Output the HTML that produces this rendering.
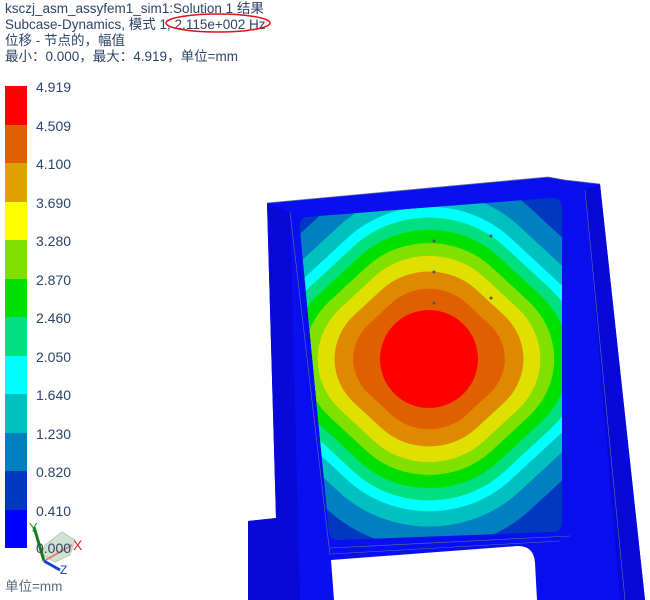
<!DOCTYPE html>
<html><head><meta charset="utf-8"><style>
html,body{margin:0;padding:0;background:#fff;width:650px;height:600px;overflow:hidden;}
body{position:relative;font-family:"Liberation Sans","Noto Sans CJK SC",sans-serif;color:#2c4466;}
.t{position:absolute;left:5px;font-size:13.5px;line-height:16px;white-space:nowrap;}
.lab{position:absolute;left:36px;font-size:14px;line-height:16px;}
.band{position:absolute;left:5px;width:22px;height:38.6px;}
</style></head><body>
<div class="t" style="top:1px">ksczj_asm_assyfem1_sim1:Solution 1 结果</div>
<div class="t" style="top:17px">Subcase-Dynamics, 模式 1, 2.115e+002 Hz</div>
<div class="t" style="top:33px">位移 - 节点的，幅值</div>
<div class="t" style="top:49px">最小：0.000，最大：4.919，单位=mm</div>
<svg style="position:absolute;left:0;top:0" width="650" height="600">
<ellipse cx="218" cy="23" rx="52" ry="9" fill="none" stroke="#e0101a" stroke-width="1.5"/>
</svg>
<div class="band" style="top:86px;background:#ff0000"></div>
<div class="band" style="top:124.5px;background:#e06000"></div>
<div class="band" style="top:163px;background:#e0a000"></div>
<div class="band" style="top:201.5px;background:#ffff00"></div>
<div class="band" style="top:240px;background:#80e000"></div>
<div class="band" style="top:278.5px;background:#00e000"></div>
<div class="band" style="top:317px;background:#00e080"></div>
<div class="band" style="top:355.5px;background:#00ffff"></div>
<div class="band" style="top:394px;background:#00c0c0"></div>
<div class="band" style="top:432.5px;background:#0080c0"></div>
<div class="band" style="top:471px;background:#0038c0"></div>
<div class="band" style="top:509.5px;height:38px;background:#0000ff"></div>
<div class="lab" style="top:79px">4.919</div>
<div class="lab" style="top:118px">4.509</div>
<div class="lab" style="top:156px">4.100</div>
<div class="lab" style="top:195px">3.690</div>
<div class="lab" style="top:233px">3.280</div>
<div class="lab" style="top:272px">2.870</div>
<div class="lab" style="top:310px">2.460</div>
<div class="lab" style="top:349px">2.050</div>
<div class="lab" style="top:387px">1.640</div>
<div class="lab" style="top:426px">1.230</div>
<div class="lab" style="top:464px">0.820</div>
<div class="lab" style="top:503px">0.410</div>
<svg style="position:absolute;left:0;top:0" width="650" height="600">
<polygon points="45,545 62,532 75,540 70,555 55,562 42,555" fill="#c8dcc8" stroke="#a0c0a0" stroke-width="1" opacity="0.8"/>
<line x1="44" y1="561" x2="34" y2="527" stroke="#1a7a1a" stroke-width="3"/>
<line x1="44" y1="561" x2="72" y2="545" stroke="#e08080" stroke-width="2"/>
<line x1="44" y1="561" x2="60" y2="570" stroke="#1a40d0" stroke-width="3"/>
<text x="29" y="532" font-size="13" fill="#2a9a2a" font-family="Liberation Sans">Y</text>
<text x="73" y="550" font-size="14" fill="#e02020" font-family="Liberation Sans">X</text>
<text x="60" y="574" font-size="12" fill="#1a40d0" font-family="Liberation Sans">Z</text>
</svg>
<div class="lab" style="top:540px;color:#2c4466">0.000</div>
<div class="t" style="top:579px;left:5px;font-size:13.5px;color:#5a6a80">单位=mm</div>
<svg style="position:absolute;left:0;top:0" width="650" height="600">
<defs>
<clipPath id="pc"><path d="M306,217 L550,198 Q562,197 562,209 L562,522 Q562,532 552,532 L338,540 Q330,540 329,532 L300,230 Q299,218 306,217 Z"/></clipPath>
</defs>
<polygon points="267,203 548,177 565,180 600,184 645,600 248,600 248,521 276,518" fill="#0a0ff0"/>
<polygon points="267,203 290,212 300,600 248,600 248,521 276,518" fill="#0808d8"/>
<polygon points="585,190 600,184 645,600 620,600" fill="#0808d8"/>
<path d="M334,600 L331,560 L518,546 Q534,546 535,563 L537,600 Z" fill="#fff"/>
<polyline points="267,203 548,177 565,180 600,184" fill="none" stroke="#6070a0" stroke-width="0.8"/>
<line x1="290" y1="212" x2="330" y2="555" stroke="#6070a0" stroke-width="0.6"/>
<line x1="585" y1="190" x2="625" y2="600" stroke="#6070a0" stroke-width="0.6"/>
<line x1="330" y1="548" x2="570" y2="536" stroke="#6070a0" stroke-width="0.6"/>
<line x1="331" y1="554" x2="560" y2="541" stroke="#6070a0" stroke-width="0.5"/>
<g clip-path="url(#pc)">
<rect x="290" y="190" width="280" height="360" fill="#0038c0"/>
<g transform="translate(429,359) scale(1.08,1) rotate(45)">
<rect x="-173" y="-173" width="346" height="346" rx="133" fill="#0080c0"/>
<rect x="-153" y="-153" width="306" height="306" rx="118" fill="#00c0c0"/>
<rect x="-139" y="-139" width="278" height="278" rx="107" fill="#00ffff"/>
<rect x="-129" y="-129" width="258" height="258" rx="99" fill="#00e080"/>
<rect x="-118" y="-118" width="236" height="236" rx="91" fill="#00e000"/>
<rect x="-106" y="-106" width="212" height="212" rx="82" fill="#80e000"/>
<rect x="-94" y="-94" width="188" height="188" rx="72" fill="#e0e000"/>
<rect x="-80" y="-80" width="160" height="160" rx="62" fill="#e08800"/>
<rect x="-64" y="-64" width="128" height="128" rx="49" fill="#e06000"/>
</g>
<ellipse cx="429" cy="359" rx="49" ry="49" fill="#ff0000"/>
</g>
<g fill="#555">
<circle cx="434" cy="241" r="1.5"/><circle cx="491" cy="236" r="1.5"/>
<circle cx="434" cy="272" r="1.5"/><circle cx="434" cy="303" r="1.5"/><circle cx="491" cy="298" r="1.5"/>
</g>
</svg>
</body></html>
